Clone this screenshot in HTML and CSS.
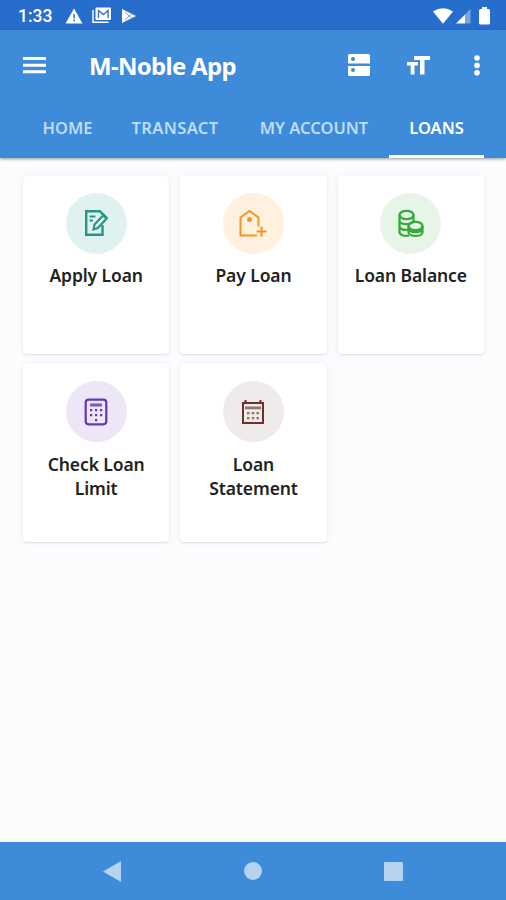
FILE: index.html
```html
<!DOCTYPE html>
<html lang="en">
<head>
  <meta charset="UTF-8">
  <meta name="viewport" content="width=device-width, initial-scale=1">
  <title>M-Noble App</title>
  <link rel="stylesheet" href="styles.css">
</head>
<body>
  <div class="status-bar">
    <span class="status-bar__time">1:33</span>
    <svg class="status-bar__warning" width="18" height="16" viewBox="0 0 18 16"><path fill="#fff" d="M9 0.5L17.5 15.5H.5z"/><path fill="#5b86d6" d="M8.2 6h1.8v4.500H8.200zM8.200 11.500h1.800v1.800H8.200z"/></svg>
    <svg class="status-bar__mail" width="20" height="17" viewBox="0 0 20 17"><path fill="none" stroke="#fff" stroke-width="1.500" d="M1 3v12.200h15.500"/><rect x="3.500" y="0.500" width="15.500" height="12.500" rx="1" fill="#fff"/><path fill="none" stroke="#3970cc" stroke-width="1.400" d="M6.500 11V3.500l4.800 4 4.800-4V11"/></svg>
    <svg class="status-bar__play" width="16" height="16" viewBox="0 0 16 16"><path fill="#fff" d="M1 1l14 7L1 15z"/><path fill="none" stroke="#6d97da" stroke-width="1" d="M4 4l7 6.500M4 12l7-6.500"/></svg>
    <div class="status-bar__right">
      <svg width="20" height="16" viewBox="0 0 20 16"><path fill="#fff" d="M0 3.500Q10-3 20 3.500L10 15.800z"/></svg>
      <svg width="15" height="16" viewBox="0 0 15 16"><path fill="#fff" d="M0 15.500L9 6.500v9z"/><path fill="#7ba5e2" d="M9 6.500L14.500 1v14.500H9z"/></svg>
      <svg width="11" height="18" viewBox="0 0 11 18"><path fill="#fff" d="M3 0h5v2h1.500Q11 2 11 3.500V16q0 1.500-1.500 1.500h-8Q0 17.500 0 16V3.500Q0 2 1.500 2H3z"/></svg>
    </div>
  </div>

  <header class="header">
    <div class="toolbar">
      <svg class="toolbar__menu" width="23" height="17" viewBox="0 0 23 17"><path fill="#fff" d="M0 0h23v3H0zM0 6.700h23v3H0zM0 13.300h23v3H0z"/></svg>
      <h1 class="toolbar__title">M-Noble App</h1>
      <div class="toolbar__actions">
        <svg width="22" height="22" viewBox="0 0 22 22"><path fill="#fff" fill-rule="evenodd" d="M1.500 0h19Q22 0 22 1.500v8H0v-8Q0 0 1.500 0zM5 3a2 2 0 1 0 .01 0zM0 12h22v8.500q0 1.500-1.500 1.500h-19Q0 22 0 20.500zM5 14a2 2 0 1 0 .01 0z"/></svg>
        <svg width="23" height="19" viewBox="0 0 23 19"><path fill="#fff" d="M7 0h16v4h-5.500v14.500h-4.500V4H7zM0 6h11v3.500H7.500v9H3.700v-9H0z"/></svg>
        <svg width="6" height="21" viewBox="0 0 6 21"><circle cx="3" cy="3" r="2.800" fill="#fff"/><circle cx="3" cy="10.400" r="2.800" fill="#fff"/><circle cx="3" cy="17.800" r="2.800" fill="#fff"/></svg>
      </div>
    </div>
    <nav class="tabs">
      <a class="tab tab--home">HOME</a>
      <a class="tab tab--transact">TRANSACT</a>
      <a class="tab tab--account">MY ACCOUNT</a>
      <a class="tab tab--loans tab--active">LOANS</a>
    </nav>
  </header>

  <main class="grid">
    <section class="card">
      <div class="card__icon card__icon--teal">
        <svg width="26" height="28" viewBox="0 0 26 28" fill="none" stroke="#259584" stroke-width="2.400"><path d="M20 5.500L17 2.200H3.200v23.600h16.300V16"/><path d="M6.500 7.500h6M6.500 11.500h3.500" stroke-width="2"/><path d="M10.500 20.500l1-5L20 6.500l3.500 3.300-8.800 9.200zM19.500 4.500l5 5" stroke-width="2.100"/></svg>
      </div>
      <div class="card__label">Apply Loan</div>
    </section>
    <section class="card">
      <div class="card__icon card__icon--orange">
        <svg width="30" height="30" viewBox="0 0 30 30" fill="none" stroke="#f6951e" stroke-width="2"><path d="M20.500 18.500V9.500L11.500 3 2.500 9.500v18H19"/><path d="M18.500 23.500h10M23.500 18.500v10"/><circle cx="11.500" cy="11.500" r="2.500" fill="#f6951e" stroke="none"/></svg>
      </div>
      <div class="card__label">Pay Loan</div>
    </section>
    <section class="card">
      <div class="card__icon card__icon--green">
        <svg width="27" height="29" viewBox="0 0 27 29" fill="none" stroke="#35aa3b" stroke-width="2.300"><ellipse cx="9.500" cy="6" rx="7" ry="4.200"/><path d="M2.500 6v17c0 3 5 4.500 9.500 3.500M16.500 6v6M2.500 11.500c0 4.500 11 5 13.500 1M2.500 17c0 3.500 5 4.500 9 3.500"/><ellipse cx="18.500" cy="17" rx="7" ry="4.200"/><path d="M11.500 17v6.200c0 5 14 5 14 0V17M11.500 20c1 4 13 4 14 0"/></svg>
      </div>
      <div class="card__label">Loan Balance</div>
    </section>
    <section class="card">
      <div class="card__icon card__icon--purple">
        <svg width="24" height="28" viewBox="0 0 24 28"><rect x="1.700" y="1.700" width="20.600" height="24.600" rx="3" fill="none" stroke="#6638af" stroke-width="2.200"/><path fill="#7f58bd" d="M6 5.500h12v3H6z"/><path fill="#6638af" d="M6 11h2.200v2.200H6zM11 11h2.200v2.200H11zM16 11h2.200v2.200H16zM6 16h2.200v2.200H6zM11 16h2.200v2.200H11zM16 16h2.200v2.200H16zM11 21h2.200v2.200H11z"/></svg>
      </div>
      <div class="card__label">Check Loan Limit</div>
    </section>
    <section class="card">
      <div class="card__icon card__icon--brown">
        <svg width="24" height="26" viewBox="0 0 24 26"><path fill="none" stroke="#6f3029" stroke-width="2" d="M2 4h20v20H2zM4.500 1v4M19.500 1v4"/><path fill="#927573" d="M4 7.500h16v2.800H4zM6 13h2.500v2.200H6zM10.800 13h2.500v2.200h-2.500zM15.500 13H18v2.200h-2.500zM6 18h2.500v2.200H6zM10.800 18h2.500v2.200h-2.500zM15.500 18H18v2.200h-2.500z"/></svg>
      </div>
      <div class="card__label">Loan Statement</div>
    </section>
  </main>

  <footer class="nav-bar">
    <svg width="18" height="21" viewBox="0 0 18 21"><path fill="#b5d2f0" d="M18 0v21L0 10.500z"/></svg>
    <svg width="18" height="18" viewBox="0 0 18 18"><circle cx="9" cy="9" r="9" fill="#b5d2f0"/></svg>
    <svg width="19" height="19" viewBox="0 0 19 19"><rect width="19" height="19" rx="1" fill="#b5d2f0"/></svg>
  </footer>
</body>
</html>
```
FILE: styles.css
```css
* {
  box-sizing: border-box;
}
body {
  margin: 0;
  height: 900px;
  display: flex;
  flex-direction: column;
  overflow: hidden;
  font-family: "Noto Sans", "Open Sans", sans-serif;
  background: #fcfcff;
}
svg {
  display: block;
  flex: none;
}

/* system status bar */
.status-bar {
  display: flex;
  align-items: center;
  height: 30px;
  padding: 1px 16px 0 18px;
  background: #276dcc;
  color: #fff;
}
.status-bar__time {
  width: 47px;
  font-family: Roboto, sans-serif;
  font-size: 17.5px;
  font-weight: 500;
}
.status-bar__mail {
  margin-left: 9px;
}
.status-bar__play {
  margin-left: 9px;
}
.status-bar__right {
  display: flex;
  align-items: center;
  gap: 3px;
  margin-left: auto;
}
.status-bar__right svg:last-child {
  margin-left: 5px;
}

/* app header */
.header {
  height: 128px;
  background: #3d8bd9;
  box-shadow: 0 1px 3px rgba(0, 0, 0, 0.4);
}
.toolbar {
  display: flex;
  align-items: center;
  height: 70px;
  padding: 0 26px 0 23px;
}
.toolbar__title {
  margin: 2px 0 0 43px;
  font-size: 24px;
  font-weight: 700;
  line-height: 32px;
  letter-spacing: -0.7px;
  color: #fff;
  white-space: nowrap;
}
.toolbar__actions {
  display: flex;
  align-items: center;
  margin-left: auto;
}
.toolbar__actions svg:nth-child(2) {
  margin: 0 44px 0 37px;
}
.tabs {
  display: flex;
  height: 58px;
  padding-left: 24px;
}
.tab {
  display: flex;
  align-items: center;
  justify-content: center;
  font-size: 16.5px;
  font-weight: 600;
  color: #bfdcf8;
  white-space: nowrap;
  border-bottom: 3px solid transparent;
}
.tab--home {
  width: 87px;
}
.tab--transact {
  width: 128px;
  letter-spacing: 0.4px;
}
.tab--account {
  width: 150px;
}
.tab--loans {
  width: 95px;
}
.tab--active {
  color: #fff;
  border-color: #fff;
}

/* loan actions */
.grid {
  display: grid;
  grid-template-columns: repeat(3, 1fr);
  grid-auto-rows: 178px;
  gap: 10.5px 11px;
  flex: 1;
  align-content: start;
  padding: 17.5px 22px 0 23px;
}
.card {
  display: flex;
  flex-direction: column;
  align-items: center;
  padding: 17px 15px 0;
  background: #fff;
  border-radius: 4px;
  box-shadow: 0 1px 2px rgba(40, 40, 60, 0.12), 0 0 8px rgba(60, 60, 90, 0.04);
}
.card__icon {
  display: flex;
  align-items: center;
  justify-content: center;
  width: 61px;
  height: 61px;
  border-radius: 50%;
}
.card__icon--teal {
  background: #dff2f0;
}
.card__icon--orange {
  background: #fff0df;
}
.card__icon--green {
  background: #e7f5e9;
}
.card__icon--purple {
  background: #ece6f7;
}
.card__icon--brown {
  background: #eeebea;
}
.card__label {
  margin-top: 9.5px;
  font-size: 17.5px;
  font-weight: 600;
  line-height: 24px;
  letter-spacing: -0.1px;
  text-align: center;
  color: #222;
}

/* system navigation */
.nav-bar {
  display: flex;
  align-items: center;
  justify-content: space-between;
  height: 58px;
  padding: 0 103px;
  background: #3d8bd9;
}
```
